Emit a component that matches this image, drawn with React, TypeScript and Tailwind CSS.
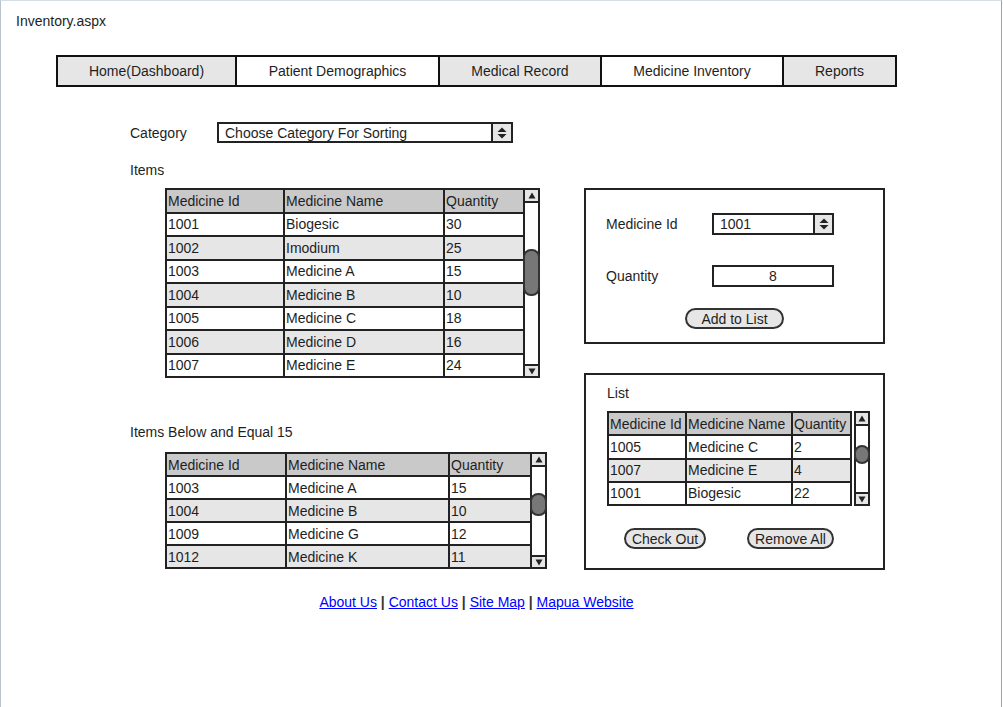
import React from "react";

type Row = [string, string, string];

function UpDown() {
  return (
    <svg width="10" height="14" viewBox="0 0 10 14">
      <path d="M0.5 6 L5 1.5 L9.5 6 Z" fill="#222" />
      <path d="M0.5 8 L5 12.5 L9.5 8 Z" fill="#222" />
    </svg>
  );
}

function TriUp() {
  return (
    <svg width="8" height="7" viewBox="0 0 8 7">
      <path d="M0.5 6.5 L4 0.5 L7.5 6.5 Z" fill="#222" />
    </svg>
  );
}

function TriDown() {
  return (
    <svg width="8" height="7" viewBox="0 0 8 7">
      <path d="M0.5 0.5 L4 6.5 L7.5 0.5 Z" fill="#222" />
    </svg>
  );
}

function DataGrid({
  colsClass,
  sizeClass,
  header,
  rows,
}: {
  colsClass: string;
  sizeClass: string;
  header: Row;
  rows: Row[];
}) {
  return (
    <div
      className={`grid ${colsClass} ${sizeClass} auto-rows-fr gap-[2px] bg-[#222] border-2 border-[#222]`}
    >
      {header.map((h, i) => (
        <div
          key={"h" + i}
          className="bg-[#c9c9c9] pl-[1px] flex items-center whitespace-nowrap overflow-hidden"
        >
          {h}
        </div>
      ))}
      {rows.map((r, ri) =>
        r.map((c, ci) => (
          <div
            key={ri + "-" + ci}
            className={`${ri % 2 === 1 ? "bg-[#e6e6e6]" : "bg-white"} pl-[1px] flex items-center whitespace-nowrap overflow-hidden`}
          >
            {c}
          </div>
        ))
      )}
    </div>
  );
}

function ScrollBar({
  boxClass,
  thumbClass,
}: {
  boxClass: string;
  thumbClass: string;
}) {
  return (
    <div className={`flex flex-col bg-white border-[#222] ${boxClass}`}>
      <div className="h-[13px] shrink-0 bg-[#e6e6e6] border-b-2 border-[#222] flex items-center justify-center">
        <TriUp />
      </div>
      <div className="flex-1 flex flex-col">
        <div
          className={`-mx-[2px] bg-[#777] border-2 border-[#333] rounded-[8px] ${thumbClass}`}
        />
      </div>
      <div className="h-[12px] shrink-0 bg-[#e6e6e6] border-t-2 border-[#222] flex items-center justify-center">
        <TriDown />
      </div>
    </div>
  );
}

const HEADER: Row = ["Medicine Id", "Medicine Name", "Quantity"];

const ITEMS: Row[] = [
  ["1001", "Biogesic", "30"],
  ["1002", "Imodium", "25"],
  ["1003", "Medicine A", "15"],
  ["1004", "Medicine B", "10"],
  ["1005", "Medicine C", "18"],
  ["1006", "Medicine D", "16"],
  ["1007", "Medicine E", "24"],
];

const LOW: Row[] = [
  ["1003", "Medicine A", "15"],
  ["1004", "Medicine B", "10"],
  ["1009", "Medicine G", "12"],
  ["1012", "Medicine K", "11"],
];

const LIST: Row[] = [
  ["1005", "Medicine C", "2"],
  ["1007", "Medicine E", "4"],
  ["1001", "Biogesic", "22"],
];

const NAV = [
  { label: "Home(Dashboard)", cls: "w-[177px] bg-[#e6e6e6]" },
  { label: "Patient Demographics", cls: "w-[203px] bg-white border-l-2 border-[#111]" },
  { label: "Medical Record", cls: "w-[162px] bg-[#e6e6e6] border-l-2 border-[#111]" },
  { label: "Medicine Inventory", cls: "w-[182px] bg-white border-l-2 border-[#111]" },
  { label: "Reports", cls: "w-[113px] bg-[#e6e6e6] border-l-2 border-[#111]" },
];

export default function App() {
  return (
    <div className="w-[1002px] h-[707px] bg-white border-l border-t border-r border-l-[#b9c3cd] border-t-[#d6dee6] border-r-[#9aa2ab] font-['Liberation_Sans',Arial,sans-serif] text-[14px] leading-[16px] text-[#1e1e1e] overflow-hidden">
      <div className="pl-[15px] pt-[12px]">Inventory.aspx</div>

      <nav className="ml-[55px] mt-[26px] w-[841px] h-[32px] border-2 border-[#111] flex">
        {NAV.map((n) => (
          <div key={n.label} className={`${n.cls} flex items-center justify-center`}>
            {n.label}
          </div>
        ))}
      </nav>

      <div className="flex mt-[35px] ml-[129px]">
        {/* left column */}
        <div className="w-[454px] shrink-0 flex flex-col">
          <div className="flex items-center h-[21px]">
            <div className="w-[87px]">Category</div>
            <div className="w-[296px] h-[21px] border-2 border-[#222] flex">
              <div className="flex-1 pl-[6px] flex items-center">Choose Category For Sorting</div>
              <div className="w-[20px] border-l-2 border-[#222] bg-[#e6e6e6] flex items-center justify-center">
                <UpDown />
              </div>
            </div>
          </div>

          <div className="mt-[19px]">Items</div>

          <div className="mt-[10px] ml-[35px] flex">
            <DataGrid
              colsClass="grid-cols-[116px_158px_78px]"
              sizeClass="w-[360px] h-[190px]"
              header={HEADER}
              rows={ITEMS}
            />
            <ScrollBar
              boxClass="w-[15px] h-[190px] border-y-2 border-r-2"
              thumbClass="mt-[46px] h-[47px]"
            />
          </div>

          <div className="mt-[46px]">Items Below and Equal 15</div>

          <div className="mt-[12px] ml-[35px] flex">
            <DataGrid
              colsClass="grid-cols-[118px_161px_80px]"
              sizeClass="w-[367px] h-[117px]"
              header={HEADER}
              rows={LOW}
            />
            <ScrollBar
              boxClass="w-[15px] h-[117px] border-y-2 border-r-2"
              thumbClass="mt-[26px] h-[23px]"
            />
          </div>
        </div>

        {/* right column */}
        <div className="w-[301px] shrink-0 flex flex-col mt-[66px]">
          <div className="h-[156px] border-2 border-[#222] pl-[20px] pt-[23px] flex flex-col">
            <div className="flex items-center h-[22px]">
              <div className="w-[106px]">Medicine Id</div>
              <div className="w-[122px] h-[22px] border-2 border-[#222] flex">
                <div className="flex-1 pl-[6px] flex items-center">1001</div>
                <div className="w-[19px] border-l-2 border-[#222] bg-[#e6e6e6] flex items-center justify-center">
                  <UpDown />
                </div>
              </div>
            </div>
            <div className="flex items-center h-[22px] mt-[30px]">
              <div className="w-[106px]">Quantity</div>
              <div className="w-[122px] h-[22px] border-2 border-[#222] flex items-center justify-center">
                8
              </div>
            </div>
            <div className="mt-[21px] -ml-[20px] flex justify-center">
              <div className="w-[99px] h-[21px] border-2 border-[#333] rounded-full bg-[#e6e6e6] flex items-center justify-center">
                Add to List
              </div>
            </div>
          </div>

          <div className="mt-[29px] h-[197px] border-2 border-[#222] pl-[21px] pt-[10px] flex flex-col">
            <div>List</div>
            <div className="mt-[10px] flex">
              <DataGrid
                colsClass="grid-cols-[76px_104px_57px]"
                sizeClass="w-[245px] h-[95px]"
                header={HEADER}
                rows={LIST}
              />
              <ScrollBar
                boxClass="ml-[2px] w-[16px] h-[95px] border-2"
                thumbClass="mt-[19px] h-[19px]"
              />
            </div>
            <div className="mt-[22px] ml-[17px] flex gap-[41px]">
              <div className="w-[82px] h-[21px] border-2 border-[#333] rounded-full bg-[#e6e6e6] flex items-center justify-center">
                Check Out
              </div>
              <div className="w-[87px] h-[21px] border-2 border-[#333] rounded-full bg-[#e6e6e6] flex items-center justify-center">
                Remove All
              </div>
            </div>
          </div>
        </div>
      </div>

      <div className="ml-[55px] w-[841px] mt-[24px] text-center">
        <a href="#" className="text-[#0000ff] underline">About Us</a>
        <span className="font-bold text-[#333]"> | </span>
        <a href="#" className="text-[#0000ff] underline">Contact Us</a>
        <span className="font-bold text-[#333]"> | </span>
        <a href="#" className="text-[#0000ff] underline">Site Map</a>
        <span className="font-bold text-[#333]"> | </span>
        <a href="#" className="text-[#0000ff] underline">Mapua Website</a>
      </div>
    </div>
  );
}
